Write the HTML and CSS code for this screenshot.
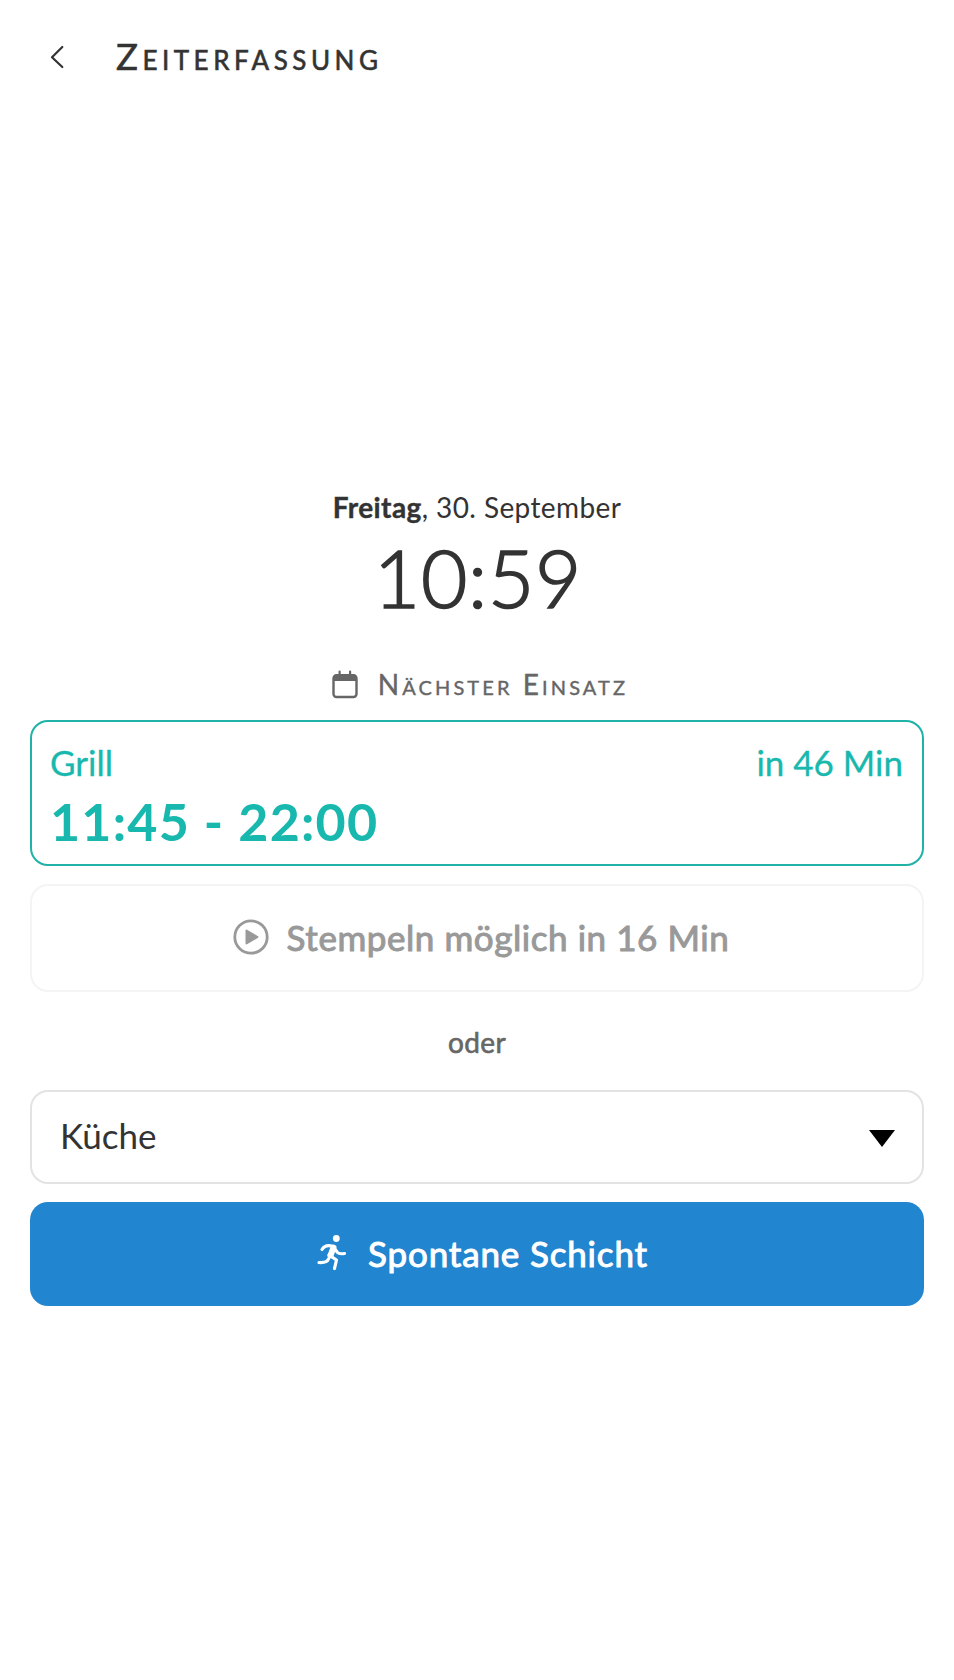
FILE: index.html
```html
<!DOCTYPE html>
<html lang="de">
<head>
<meta charset="utf-8">
<title>Zeiterfassung</title>
<link rel="stylesheet" href="styles.css">
</head>
<body>
<header class="topbar">
  <svg class="back" viewBox="0 0 14 24"><path d="M12.3 2 2 12.2 12.3 22"/></svg>
  <h1 class="title">Zeiterfassung</h1>
</header>
<main class="content">
  <p class="date"><strong class="weekday">Freitag</strong>, 30. September</p>
  <p class="clock">10:59</p>
  <h2 class="next">
    <svg class="calendar" viewBox="0 0 26 29"><path class="calendar-frame" d="M4.500 5.500h17a3 3 0 0 1 3 3v15.500a3 3 0 0 1-3 3h-17a3 3 0 0 1-3-3v-15.500a3 3 0 0 1 3-3z"/><path class="calendar-head" d="M1 11V8a4 4 0 0 1 4-4h16a4 4 0 0 1 4 4v3zM6.500 1.500a1 1 0 0 1 2.200 0V5H6.500zM17 1.500a1 1 0 0 1 2.200 0V5H17z"/></svg>
    <span class="next-label">Nächster Einsatz</span>
  </h2>
  <section class="shift">
    <div class="shift-row"><span class="shift-name">Grill</span><span class="shift-in">in 46 Min</span></div>
    <div class="shift-time">11:45 - 22:00</div>
  </section>
  <button class="stamp" disabled>
    <svg class="play" viewBox="0 0 36 36"><circle cx="18" cy="18" r="16.200"/><path d="M13.500 11.500v13l11-6.500z"/></svg>
    <span class="stamp-label">Stempeln möglich in 16 Min</span>
  </button>
  <p class="or">oder</p>
  <div class="select"><span class="select-value">Küche</span><svg class="caret" viewBox="0 0 26 17"><path d="M0 0h26L13 17z"/></svg></div>
  <button class="spontaneous">
    <svg class="runner" viewBox="0 0 30 36"><circle cx="19.300" cy="3.500" r="3.400"/><path class="limb" d="M5 14.500C7.500 10.500 11 9.700 16 11.500L20.500 17.500Q22 19.300 27.500 18.500M12 20 19.500 25 17.500 33.500M11.500 24Q10 28 2 27.500"/><path class="torso" d="M16.500 12.500 13.500 20.500"/></svg>
    <span class="spontaneous-label">Spontane Schicht</span>
  </button>
</main>
</body>
</html>
```
FILE: styles.css
```css
* { box-sizing: border-box; }
body {
  margin: 0;
  min-height: 1680px;
  background: #fff;
  color: #333;
  font-family: Lato, "Noto Sans", sans-serif;
}
h1, h2, p { margin: 0; font-weight: 400; }
button { font: inherit; padding: 0; margin: 0; }
svg { display: block; flex: none; }

.topbar { display: flex; align-items: center; height: 113px; padding-left: 50px; }
.back { width: 14px; height: 24px; fill: none; stroke: #333; stroke-width: 2.2; stroke-linecap: round; stroke-linejoin: round; }
.title {
  margin-left: 52px;
  padding-bottom: 2px;
  font-size: 36.5px;
  line-height: 44px;
  font-variant: small-caps;
  letter-spacing: 4.5px;
  -webkit-text-stroke: .6px;
}

.content { display: flex; flex-direction: column; padding: 374px 30px 0; }
.date { height: 37px; font-size: 28px; line-height: 40px; letter-spacing: .4px; text-align: center; }
.weekday { font-weight: 700; -webkit-text-stroke: .4px; }
.clock { height: 109px; padding-left: 2px; font-size: 80px; line-height: 106px; font-weight: 300; letter-spacing: .7px; text-align: center; -webkit-text-stroke: 1.7px; }
.next { display: flex; justify-content: center; align-items: center; height: 87px; padding: 16px 0 0 6px; color: #666; font-size: 28px; }
.calendar { width: 26px; height: 29px; margin-right: 20px; }
.calendar-frame { fill: none; stroke: #666; stroke-width: 2.4; }
.calendar-head { fill: #666; }
.next-label { padding-bottom: 1px; font-variant: small-caps; letter-spacing: 3.1px; -webkit-text-stroke: .4px; }

.shift { height: 146px; padding: 17px 19px 0 18px; border: 2px solid #20b2a6; border-radius: 18px; color: #18b8ae; }
.shift-row { display: flex; justify-content: space-between; font-size: 35px; line-height: 46px; -webkit-text-stroke: .3px; }
.shift-time { padding-top: 1px; font-size: 52px; line-height: 70px; font-weight: 700; letter-spacing: 1.2px; }

.stamp { display: flex; justify-content: center; align-items: center; height: 108px; margin-top: 18px; padding: 0 0 3px 8px; background: #fff; border: 2px solid #f4f4f4; border-radius: 18px; color: #999; font-size: 35px; letter-spacing: .57px; }
.play { width: 36px; height: 36px; margin-right: 18px; fill: #999; stroke: #999; stroke-width: 2; stroke-linejoin: round; }
.play circle { fill: none; stroke-width: 2.8; }
.stamp-label, .spontaneous-label { -webkit-text-stroke: 1px; }

.or { height: 98px; color: #666; font-size: 28px; line-height: 100px; letter-spacing: .4px; text-align: center; -webkit-text-stroke: .6px; }
.select { display: flex; justify-content: space-between; align-items: center; height: 94px; padding: 0 27px 0 28px; border: 2px solid #e3e3e3; border-radius: 18px; font-size: 35px; }
.select-value { padding-bottom: 4px; }
.caret { width: 26px; height: 17px; margin-top: 3px; }
.spontaneous { display: flex; justify-content: center; align-items: center; height: 104px; margin-top: 18px; padding: 0 0 2px 11px; background: #2185d0; border: 0; border-radius: 18px; color: #fff; font-size: 35px; letter-spacing: .85px; }
.runner { width: 30px; height: 36px; margin-right: 21px; fill: #fff; stroke-linecap: round; stroke-linejoin: round; }
.limb { fill: none; stroke: #fff; stroke-width: 3.2; }
.torso { stroke: #fff; stroke-width: 6; }
```
